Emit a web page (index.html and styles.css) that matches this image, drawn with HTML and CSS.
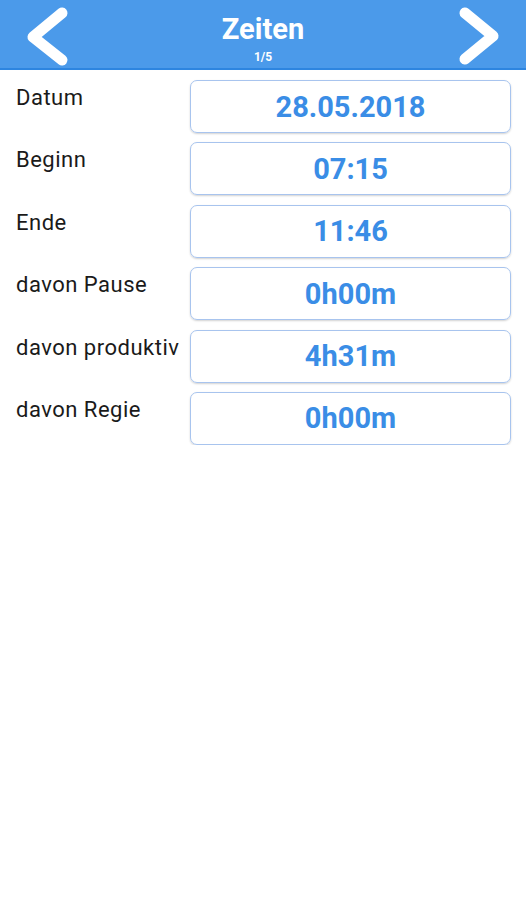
FILE: index.html
```html
<!DOCTYPE html>
<html lang="de">

<head>
    <meta charset="UTF-8">
    <meta name="viewport" content="width=device-width, initial-scale=1.0">
    <title>Zeiten</title>
    <link rel="stylesheet" href="styles.css">
</head>

<body>
    <div id="kopf">
        <div class="pfeil">
            <svg width="50" height="68" viewBox="0 0 50 68">
                <polyline points="42,13 13,37 42,60" />
            </svg>
        </div>
        <div id="titel">
            <div id="titelText">Zeiten</div>
            <div id="seite">1/5</div>
        </div>
        <div class="pfeil">
            <svg width="50" height="68" viewBox="0 0 50 68">
                <polyline points="9,13 37,36 9,59" />
            </svg>
        </div>
    </div>
    <div id="liste">
        <div class="zeile">
            <div class="label">Datum</div>
            <div class="wert">28.05.2018</div>
        </div>
        <div class="zeile">
            <div class="label">Beginn</div>
            <div class="wert">07:15</div>
        </div>
        <div class="zeile">
            <div class="label">Ende</div>
            <div class="wert">11:46</div>
        </div>
        <div class="zeile">
            <div class="label">davon Pause</div>
            <div class="wert">0h00m</div>
        </div>
        <div class="zeile">
            <div class="label">davon produktiv</div>
            <div class="wert">4h31m</div>
        </div>
        <div class="zeile">
            <div class="label">davon Regie</div>
            <div class="wert">0h00m</div>
        </div>
    </div>
</body>

</html>
```

FILE: styles.css
```css
body {
    margin: 0;
    background-color: white;
    font-family: Roboto, "Liberation Sans", sans-serif;
}

#kopf {
    height: 68px;
    background-color: #4b9aea;
    border-bottom: 2px solid #2d85e0;
    display: flex;
    align-items: center;
    justify-content: space-between;
    padding: 0 20px;
}

.pfeil {
    width: 50px;
    height: 68px;
    display: flex;
}

.pfeil polyline {
    fill: none;
    stroke: white;
    stroke-width: 11;
    stroke-linecap: round;
    stroke-linejoin: round;
}

#titel {
    color: white;
    font-weight: bold;
    text-align: center;
    padding-top: 5px;
}

#titelText {
    font-size: 29px;
    line-height: 40px;
}

#seite {
    font-size: 12px;
    line-height: 16px;
}

#liste {
    display: grid;
    row-gap: 9.4px;
    padding: 10px 15px 0 16px;
}

.zeile {
    display: grid;
    grid-template-columns: 174px 1fr;
}

.label {
    font-size: 22px;
    line-height: 24px;
    letter-spacing: 0.5px;
    color: #1a1a1a;
    padding-top: 6px;
    white-space: nowrap;
}

.wert {
    box-sizing: border-box;
    height: 53px;
    border: 1px solid #a8c4ee;
    border-radius: 7px;
    box-shadow: 0 1px 2px rgba(0, 0, 0, 0.18);
    display: flex;
    align-items: center;
    justify-content: center;
    color: #3a8de6;
    font-size: 29px;
    font-weight: bold;
}
```
